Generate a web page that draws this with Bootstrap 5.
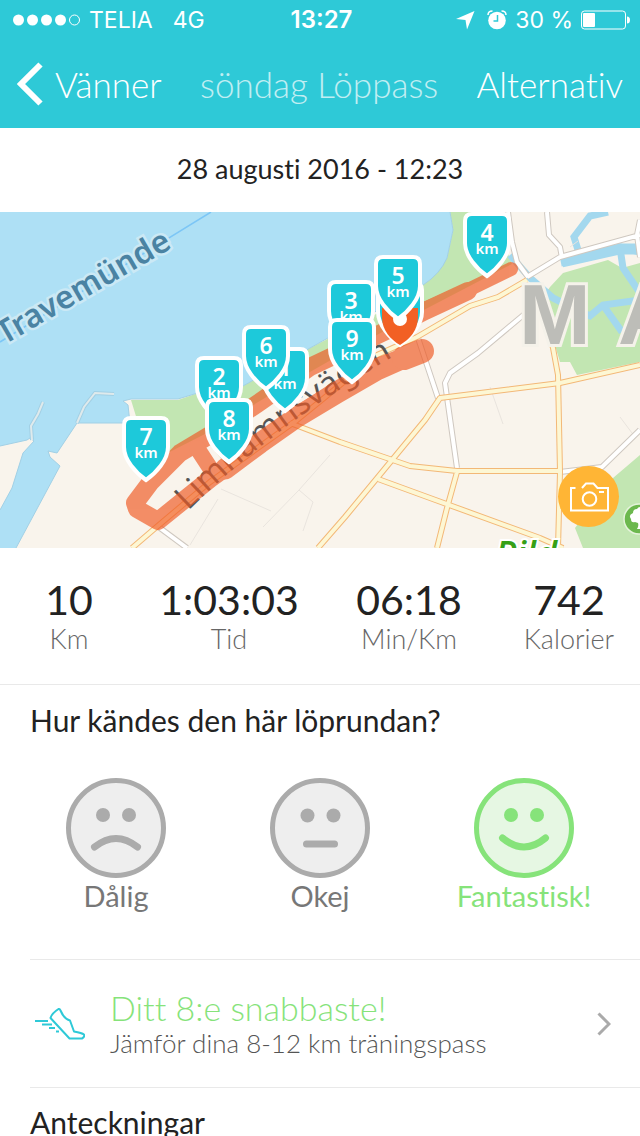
<!DOCTYPE html>
<html lang="sv">
<head>
<meta charset="utf-8">
<meta name="viewport" content="width=device-width, initial-scale=1">
<title>söndag Löppass</title>
<link href="https://cdn.jsdelivr.net/npm/bootstrap@5.3.0/dist/css/bootstrap.min.css" rel="stylesheet">
<style>
  body { font-family: Lato, "Open Sans", sans-serif; font-variant-ligatures: none; color: #222; background: #fff; line-height: 1; }
  .topbar { background: #2ec9d7; color: #fff; }
  .status { height: 40px; padding: 0 10px 0 13px; font: 400 23px/40px Inter, Roboto, sans-serif; }
  .status-side { flex: 1 1 0; }
  .status-time { font-weight: 600; font-size: 24px; }
  .titlebar { height: 88px; padding: 0 17px; font-size: 35px; font-weight: 300; }
  .titlebar h1 { font-size: 35px; font-weight: 300; opacity: .7; }
  .run-date { height: 84px; padding-bottom: 4px; font-size: 27px; }
  .map-art { width: 100%; height: auto; }
  .water-name { font: 600 32px "Noto Sans", sans-serif; fill: #4a83a3; stroke: #cbe9f5; stroke-width: 5; paint-order: stroke; }
  .street-name { font: 400 33px "Noto Sans", sans-serif; fill: #555; }
  .city-name { font: 700 86px "Liberation Sans", sans-serif; fill: #bdbdb8; stroke: #f5f2ea; stroke-width: 6; paint-order: stroke; }
  .park-name { font: italic 600 36px "Open Sans", sans-serif; fill: #35a016; stroke: #fff; stroke-width: 4; paint-order: stroke; }
  .pin-no { font: 600 23px "Noto Sans", sans-serif; fill: #fff; text-anchor: middle; }
  .pin-km { font: 600 15px "Noto Sans", sans-serif; fill: #fff; text-anchor: middle; }
  .camera-btn { right: 21px; bottom: 21px; width: 61px; height: 61px; background: #ffb535; border: 0; }
  .stats { display: grid; grid-template-columns: 138fr 182fr 178fr 142fr; padding: 29px 0; border-bottom: 1px solid #e9e9e9; }
  .stats dd { font-size: 41px; line-height: 46px; }
  .stats dt { font-size: 27px; line-height: 32px; font-weight: 300; color: #666; }
  .section-title { font-size: 30px; line-height: 36px; font-weight: 400; }
  .feel-title { padding: 17px 30px 0; }
  .feelings { padding: 40px 14px 45px; }
  .feeling { font-size: 29px; line-height: 36px; color: #777; --line: #ababab; --face: #eee; }
  .btn-check:checked + .feeling { color: #86e37a; --line: #86e37a; --face: #e6f7e3; }
  .inset-line { margin-left: 30px; border-top: 1px solid #e9e9e9; }
  .best-row { height: 127px; padding: 0 29px 0 5px; gap: 25px; }
  .best-title { font-size: 34px; line-height: 38px; font-weight: 300; color: #86e37a; }
  .best-note { font-size: 26px; line-height: 32px; font-weight: 300; color: #555; }
</style>
</head>
<body class="vh-100 overflow-hidden">
<header class="topbar">
  <div class="status d-flex align-items-center">
    <div class="status-side d-flex align-items-center">
      <svg width="68" height="12" viewBox="0 0 68 12" fill="#fff" aria-hidden="true"><circle cx="5.500" cy="6" r="5.500"/><circle cx="19.500" cy="6" r="5.500"/><circle cx="33.500" cy="6" r="5.500"/><circle cx="47.500" cy="6" r="5.500"/><circle cx="61.500" cy="6" r="5" fill="none" stroke="#fff"/></svg>
      <span class="ms-2">TELIA</span><span class="ms-3 ps-1">4G</span>
    </div>
    <span class="status-time">13:27</span>
    <div class="status-side d-flex align-items-center justify-content-end">
      <svg class="me-2" width="19" height="19" viewBox="0 0 19 19" aria-hidden="true"><path d="M18.500 0 11 18.500 9.500 9 0 8Z" fill="#fff"/></svg>
      <svg class="ms-1" width="20" height="20" viewBox="0 0 20 20" aria-hidden="true"><circle cx="10" cy="10.500" r="8.800" fill="#fff"/><path d="M1 5Q1 1 5.500 1M19 5q0-4-4.500-4" fill="none" stroke="#fff" stroke-width="1.500"/><path d="M10.500 5v6H6.500" fill="none" stroke="#2ec9d7" stroke-width="1.500"/></svg>
      <span class="px-2">30 %</span>
      <svg width="49" height="20" viewBox="0 0 49 20" aria-hidden="true"><rect x=".500" y="1" width="44" height="18" rx="3" fill="none" stroke="#fff"/><rect x="2" y="3" width="12" height="14" rx="1" fill="#fff"/><path d="M46 6.500q3 0 3 3.500t-3 3.500z" fill="#fff"/></svg>
    </div>
  </div>
  <nav class="titlebar d-flex align-items-center justify-content-between">
    <a href="#" class="d-flex align-items-center text-white text-decoration-none">
      <svg class="me-2" width="26" height="44" viewBox="0 0 26 44" aria-hidden="true"><path d="M23.500 2.500 4 22l19.500 19.500" fill="none" stroke="#fff" stroke-width="6"/></svg>
      <span class="ms-1">Vänner</span>
    </a>
    <h1 class="m-0">söndag Löppass</h1>
    <a href="#" class="text-white text-decoration-none">Alternativ</a>
  </nav>
</header>

<main>
  <p class="run-date d-flex align-items-center justify-content-center m-0">28 augusti 2016 - 12:23</p>

  <section class="position-relative" aria-label="Karta">
    <svg class="map-art d-block" viewBox="0 0 640 336" role="img" aria-label="Löprunda längs Limhamnsvägen">
      <defs>
        <path id="shield" d="M-15 2H15Q22 2 22 9V31C22 44 10 57 0 64C-10 57-22 44-22 31V9Q-22 2-15 2Z" fill="#1dc9da" stroke="#fff" stroke-width="4"/>
        <path id="street" d="M188 299Q282 206 412 134"/>
        <g id="main-roads" fill="none" stroke-linejoin="round">
          <path d="M132 336 153 318 210 270 297 208 377 143 417 125 470 94 498 85 527 68"/>
          <path d="M640 153 560 171 440 186 425 208 345 305 318 336"/>
          <path d="M536 80 553 136 558 163 560 260 558 336"/>
          <path d="M290 211 340 230 410 254 457 259H560M457 260 447 296 437 336M378 267 430 286 540 326 563 336"/>
        </g>
        <g id="side-roads" fill="none" stroke-linejoin="round">
          <path d="M418 126 438 186M527 100 478 141 450 161 445 171 457 256M527 65 560 45 640 23M547 0 549 23 560 35 562 46M508 0 512 30 517 50 528 65M560 260 602 255 640 218M160 316 187 336M640 8 637 23 640 45"/>
        </g>
      </defs>
      <rect width="640" height="336" fill="#f9f4ec"/>
      <path d="M131 188H178L201 180 243 174 290 146 310 136 380 100 430 68 447 46 453 18 450 0H500L508 42 512 52 420 100 345 140 275 180 205 222 150 250Z" fill="#c2e6b2"/>
      <path d="M550 75 563 61 608 48 622 56 640 51V150L577 163 570 150H560L551 120 543 85ZM640 243 613 266 575 316 583 336H640Z" fill="#c2e6b2"/>
      <path d="M0 0H450L453 18 447 46Q440 62 423 73L380 97 310 136 243 174 201 180 178 187H131L123 189 128 193 130 211H77L57 241 48 239 50 245 60 254 16 336H0V298L12 276 23 241 34 229 30 226 27 228 0 234Z" fill="#aee0f5"/>
      <path d="M450 0 453 18 447 46Q440 62 423 73L380 97 310 136 243 174 201 180 178 187H131L123 189 128 193 130 211H77L57 241 48 239 50 245 60 254 16 336M0 298 12 276 23 241 34 229 30 226 27 228 0 234" fill="none" stroke="#a2d0e5"/>
      <path d="M32 228 31 214 38 202 43 190M77 211 84 195 95 181 114 182" fill="none" stroke="#a2d0e5" stroke-width="4"/>
      <path d="M32 228 31 214 38 202 43 190M77 211 84 195 95 181 114 182" fill="none" stroke="#dfeaec" stroke-width="2"/>
      <g fill="none" stroke="#a3d8ee" stroke-width="7">
        <path d="M608 0 590 4 574 25 578 38M561 51 590 45 620 35 640 40M620 36 623 56 640 81M510 43 530 66 553 86 573 96 590 104 603 93 640 88M603 93 622 120"/>
        <path d="M562 50 620 37H640" stroke-width="11"/>
      </g>
      <path d="M0 130 211 0" stroke="#7cc6f6" stroke-width="1.500"/>
      <path d="M221 277 271 299M263 315 299 278 330 243M299 278 313 290 303 319M490 175 503 212M218 287 190 333M620 205 635 225M570 35 578 29" fill="none" stroke="#e9e4de"/>
      <use href="#side-roads" stroke="#cfc8c0" stroke-width="6"/>
      <use href="#side-roads" stroke="#fff" stroke-width="4"/>
      <use href="#main-roads" stroke="#f3b877" stroke-width="6"/>
      <use href="#main-roads" stroke="#fdf7d4" stroke-width="4"/>
      <text class="water-name" transform="translate(4 133) rotate(-30)">Travemünde</text>
      <text class="city-name" y="132" x="519 618">MA</text>
      <text class="park-name" x="495" y="355">Pild</text>
      <text class="street-name"><textPath href="#street">Limhamnsvägen</textPath></text>
      <g opacity=".67" fill="none" stroke="#f05a24" stroke-linecap="round" stroke-linejoin="round">
        <path d="M511 57 468 78 425 97" stroke-width="14"/>
        <path d="M468 79 425 99 390 117 310 155 257 192 225 214 180 241 150 271 135 291 137 297 158 309 210 267 260 231 297 204 337 178 377 155 400 147" stroke-width="18"/>
        <path d="M197 236 214 262M285 212 300 203" stroke-width="16"/>
        <path d="M225 257 260 231 297 205 337 181 377 158 404 146" stroke-width="21"/>
        <path d="M404 146 422 139" stroke-width="24"/>
      </g>
      <g><use href="#shield" x="351" y="68"/><text class="pin-no" x="351" y="97">3</text><text class="pin-km" x="351" y="110">km</text></g>
      <use href="#shield" x="400" y="69"/>
      <path d="M382 96V106C382 118 391 128 400 133C410 127 418 118 418 105V96Z" fill="#f26024"/>
      <circle cx="400" cy="107" r="7" fill="#fff"/>
      <g><use href="#shield" x="398" y="43"/><text class="pin-no" x="398" y="72">5</text><text class="pin-km" x="398" y="85">km</text></g>
      <g><use href="#shield" x="352" y="106"/><text class="pin-no" x="352" y="135">9</text><text class="pin-km" x="352" y="148">km</text></g>
      <g><use href="#shield" x="487" y="0"/><text class="pin-no" x="487" y="29">4</text><text class="pin-km" x="487" y="42">km</text></g>
      <g><use href="#shield" x="285" y="135"/><text class="pin-no" x="285" y="164">1</text><text class="pin-km" x="285" y="177">km</text></g>
      <g><use href="#shield" x="266" y="113"/><text class="pin-no" x="266" y="142">6</text><text class="pin-km" x="266" y="155">km</text></g>
      <g><use href="#shield" x="219" y="144"/><text class="pin-no" x="219" y="173">2</text><text class="pin-km" x="219" y="186">km</text></g>
      <g><use href="#shield" x="229" y="186"/><text class="pin-no" x="229" y="215">8</text><text class="pin-km" x="229" y="228">km</text></g>
      <g><use href="#shield" x="146" y="204"/><text class="pin-no" x="146" y="233">7</text><text class="pin-km" x="146" y="246">km</text></g>
      <circle cx="639" cy="307" r="15" fill="#6cb84e" stroke="#e4f3da" stroke-width="1.500"/>
      <path d="M637 317q2-3 1-6l-3-1q-4 1-4-3-3-4 2-6 0-4 4-4 1-2 3-2v22z" fill="#fff"/>
    </svg>
    <button type="button" class="camera-btn position-absolute rounded-circle d-flex align-items-center justify-content-center p-0" aria-label="Lägg till foto">
      <svg width="40" height="30" viewBox="0 0 40 30" fill="none" stroke="#fff" stroke-width="2"><path d="M6.500 6H2V28.500H39V6H28.500L24.500 1.500H17L13 6"/><circle cx="20.500" cy="17" r="6.800"/><path d="M30 10h5"/></svg>
    </button>
  </section>

  <dl class="stats text-center m-0">
    <div class="d-flex flex-column-reverse"><dt>Km</dt><dd class="m-0">10</dd></div>
    <div class="d-flex flex-column-reverse"><dt>Tid</dt><dd class="m-0">1:03:03</dd></div>
    <div class="d-flex flex-column-reverse"><dt>Min/Km</dt><dd class="m-0">06:18</dd></div>
    <div class="d-flex flex-column-reverse"><dt>Kalorier</dt><dd class="m-0">742</dd></div>
  </dl>

  <section>
    <h2 id="feel-title" class="section-title feel-title m-0">Hur kändes den här löprundan?</h2>
    <div class="feelings row g-0 text-center" role="radiogroup" aria-labelledby="feel-title">
      <div class="col">
        <input class="btn-check" type="radio" name="feel" id="feel-bad">
        <label class="feeling" for="feel-bad">
          <svg class="d-block mx-auto" width="100" height="100" viewBox="0 0 100 100" fill="none" stroke="var(--line)"><circle cx="50" cy="50" r="47.500" fill="var(--face)" stroke-width="5"/><path d="M28.500 69Q50 52 71.500 69" stroke-width="7" stroke-linecap="round"/><g fill="var(--line)" stroke="none"><circle cx="37" cy="37" r="7"/><circle cx="63" cy="37" r="7"/></g></svg>
          Dålig</label>
      </div>
      <div class="col">
        <input class="btn-check" type="radio" name="feel" id="feel-ok">
        <label class="feeling" for="feel-ok">
          <svg class="d-block mx-auto" width="100" height="100" viewBox="0 0 100 100" fill="none" stroke="var(--line)"><circle cx="50" cy="50" r="47.500" fill="var(--face)" stroke-width="5"/><path d="M36.500 66H64.500" stroke-width="7" stroke-linecap="round"/><g fill="var(--line)" stroke="none"><circle cx="37.500" cy="37.500" r="7"/><circle cx="63.500" cy="37.500" r="7"/></g></svg>
          Okej</label>
      </div>
      <div class="col">
        <input class="btn-check" type="radio" name="feel" id="feel-great" checked>
        <label class="feeling" for="feel-great">
          <svg class="d-block mx-auto" width="100" height="100" viewBox="0 0 100 100" fill="none" stroke="var(--line)"><circle cx="50" cy="50" r="47.500" fill="var(--face)" stroke-width="5"/><path d="M28.500 60Q50 78 71.500 60" stroke-width="7" stroke-linecap="round"/><g fill="var(--line)" stroke="none"><circle cx="37" cy="37" r="7"/><circle cx="63" cy="37" r="7"/></g></svg>
          Fantastisk!</label>
      </div>
    </div>
  </section>

  <div class="inset-line">
    <a href="#" class="best-row d-flex align-items-center text-decoration-none">
      <svg class="flex-shrink-0" width="50" height="34" viewBox="0 0 50 34" fill="none" stroke="#2ec9d7" stroke-width="2" stroke-linejoin="round"><path d="M23.500 2Q17 6 15.500 11L34.500 31.500H47Q50 30 49 27.500 47 26 39 24.500L35 13.500Q29 12 25.500 3.500Q24.500 1.500 23.500 2Z"/><path d="M0 14H13M7 17.500H17M14 21H20M21 24.500H24"/></svg>
      <span class="flex-grow-1"><span class="best-title d-block">Ditt 8:e snabbaste!</span><span class="best-note d-block">Jämför dina 8-12 km träningspass</span></span>
      <svg class="flex-shrink-0" width="14" height="24" viewBox="0 0 14 24" aria-hidden="true"><path d="M1.500 1.500 12 12 1.500 22.500" fill="none" stroke="#aaa" stroke-width="3"/></svg>
    </a>
  </div>
  <section class="inset-line pt-3">
    <h2 class="section-title m-0">Anteckningar</h2>
  </section>
</main>
<script src="https://cdn.jsdelivr.net/npm/bootstrap@5.3.0/dist/js/bootstrap.bundle.min.js"></script>
</body>
</html>
